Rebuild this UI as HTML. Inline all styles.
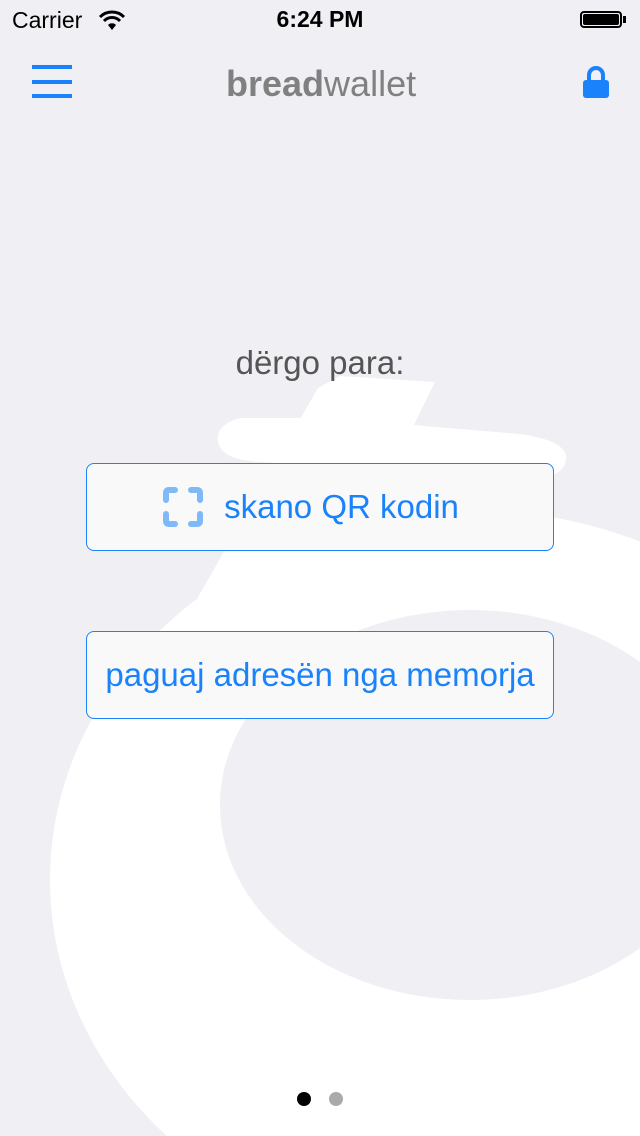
<!DOCTYPE html>
<html><head><style>
html,body{margin:0;width:640px;height:1136px;overflow:hidden}
body{background:#efeff4;position:relative;font-family:"Liberation Sans",sans-serif}
.abs{position:absolute}
.btn{position:absolute;left:86px;width:468px;height:88px;border:1px solid #1a82fb;border-radius:8px;background:#f9f9f9;color:#1a82fb;font-size:33px;display:flex;align-items:center;justify-content:center;box-sizing:border-box}
</style></head><body>
<svg class="abs" style="left:0;top:0;display:block" width="640" height="1136">
<ellipse fill="#fff" cx="470" cy="880" rx="420" ry="370"/>
<polygon fill="#fff" points="318,388 340,376 435,382 230,800 70,820"/>
<path fill="#fff" d="M240 418 Q215 425 218 442 Q222 460 260 462 L530 478 Q568 478 566 455 Q562 440 520 434 L330 418 Z"/>
<ellipse fill="#efeff4" cx="470" cy="805" rx="250" ry="195"/>
</svg>
<div class="abs" style="left:12px;top:7px;font-size:23px;color:#000">Carrier</div>
<svg class="abs" style="left:98px;top:9px" width="28" height="22" viewBox="0 0 28 22"><path d="M2 8 A17 17 0 0 1 26 8" stroke="#000" stroke-width="3" fill="none"/><path d="M6 12 A11 11 0 0 1 22 12" stroke="#000" stroke-width="3" fill="none"/><path d="M10 16 A5.5 5.5 0 0 1 18 16 L14 21 Z" fill="#000"/></svg>
<div class="abs" style="left:0;width:640px;text-align:center;top:6px;font-size:23px;font-weight:bold">6:24 PM</div>
<div class="abs" style="left:580px;top:11px;width:42px;height:17px;border:2px solid #000;border-radius:4px;box-sizing:border-box;padding:1px"><div style="background:#000;width:100%;height:100%;border-radius:2px"></div></div>
<div class="abs" style="left:623px;top:16px;width:3px;height:7px;background:#000"></div>
<div class="abs" style="left:32px;top:65px;width:40px;height:4px;background:#1a82fb"></div>
<div class="abs" style="left:32px;top:80px;width:40px;height:4px;background:#1a82fb"></div>
<div class="abs" style="left:32px;top:94px;width:40px;height:4px;background:#1a82fb"></div>
<div class="abs" style="left:226px;top:63px;font-size:36px;color:#808080;letter-spacing:0"><b>bread</b>wallet</div>
<svg class="abs" style="left:582px;top:66px" width="28" height="33"><path d="M7 14 V9 A7 7 0 0 1 21 9 V14" stroke="#1a82fb" stroke-width="4" fill="none"/><rect x="1" y="14" width="26" height="18" rx="3" fill="#1a82fb"/></svg>
<div class="abs" style="left:0;width:640px;text-align:center;top:344px;font-size:33px;color:#555">dërgo para:</div>
<div class="btn" style="top:463px;padding-right:18px"><svg width="40" height="40" viewBox="0 0 40 40" style="margin-right:21px"><g stroke="#7fb9f8" stroke-width="6" fill="none" stroke-linecap="round"><path d="M3 13 V6 Q3 3 6 3 H12"/><path d="M28 3 H34 Q37 3 37 6 V13"/><path d="M37 27 V34 Q37 37 34 37 H28"/><path d="M12 37 H6 Q3 37 3 34 V27"/></g></svg>skano QR kodin</div>
<div class="btn" style="top:631px">paguaj adresën nga memorja</div>
<div class="abs" style="left:297px;top:1092px;width:14px;height:14px;border-radius:50%;background:#000"></div>
<div class="abs" style="left:329px;top:1092px;width:14px;height:14px;border-radius:50%;background:#aaa"></div>
</body></html>
